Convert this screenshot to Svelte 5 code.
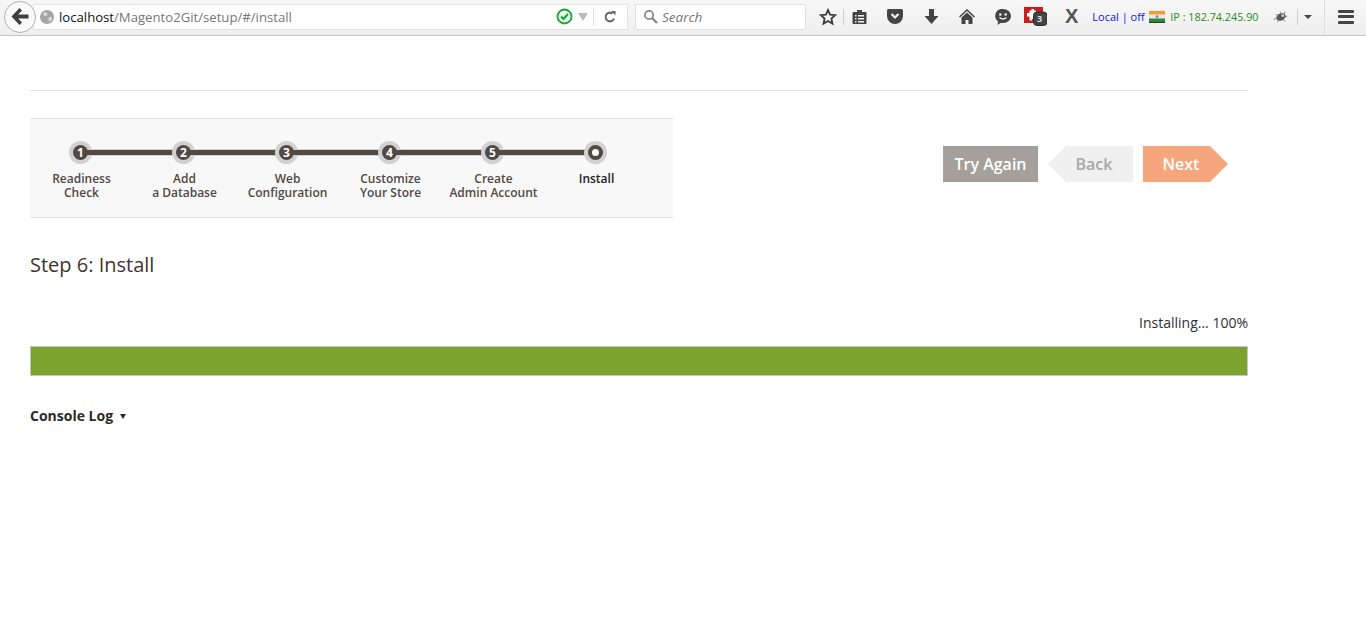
<script>
    const steps = [
        ["Readiness", "Check"],
        ["Add", "a Database"],
        ["Web", "Configuration"],
        ["Customize", "Your Store"],
        ["Create", "Admin Account"],
        ["Install", ""],
    ];
</script>

<div class="toolbar">
    <div class="back">
        <svg width="18" height="17" viewBox="0 0 18 17"><path d="M8.500 0 0.500 8.500 8.500 17 11 14.500 7.200 10.500H17.500V6.500H7.200L11 2.500z" fill="#3d3d3d" /></svg>
    </div>
    <div class="urlbar">
        <svg class="globe" width="14" height="14" viewBox="0 0 14 14">
            <circle cx="7" cy="7" r="7" fill="#a4a4a4" />
            <path d="M3 3l3-1 2 2-2 2-2 0zM9 7l3 0 0 3-3 2-1-3z" fill="#d6d6d6" />
        </svg>
        <span class="url"><span class="host">localhost</span>/Magento2Git/setup/#/install</span>
        <svg class="check" width="17" height="17" viewBox="0 0 17 17">
            <circle cx="8.500" cy="8.500" r="7" fill="#e9f6ea" stroke="#1aa33a" stroke-width="1.800" />
            <path d="M5 8.500l2.500 2.500 4.500-5" fill="none" stroke="#1aa33a" stroke-width="2" />
        </svg>
        <span class="drop"></span>
        <span class="sep"></span>
        <svg class="reload" width="14" height="14" viewBox="0 0 14 14">
            <path d="M11 8.500A4.300 4.300 0 1 1 9.500 3.600" fill="none" stroke="#666" stroke-width="2" />
            <path d="M8 1h4.500v4.500z" fill="#666" />
        </svg>
    </div>
    <div class="searchbar">
        <svg width="15" height="15" viewBox="0 0 15 15">
            <circle cx="6" cy="6" r="4.200" fill="none" stroke="#888" stroke-width="1.800" />
            <path d="M9 9l5 5" stroke="#888" stroke-width="2.400" />
        </svg>
        <span>Search</span>
    </div>
    <svg class="star" width="18" height="18" viewBox="0 0 18 18">
        <path d="M9 2l2.100 4.700 5.100.5-3.800 3.400 1.100 5L9 13l-4.500 2.600 1.100-5L1.800 7.200l5.100-.5z" fill="none" stroke="#3c3c3c" stroke-width="1.800" />
    </svg>
    <span class="tsep star-sep"></span>
    <svg class="clip" width="15" height="16" viewBox="0 0 15 16">
        <path d="M1.500 3h3.500V1h5v2h3.500a1 1 0 0 1 1 1v10a1 1 0 0 1-1 1h-12a1 1 0 0 1-1-1V4a1 1 0 0 1 1-1z" fill="#444" />
        <path d="M3 6h1.500v1.500H3zM3 9h1.500v1.500H3zM3 12h1.500v1.500H3zM6 6h6v1.500H6zM6 9h6v1.500H6zM6 12h6v1.500H6z" fill="#f2f2f2" />
    </svg>
    <svg class="pocket" width="16" height="15" viewBox="0 0 16 15">
        <path d="M1.500 0h13A1.500 1.500 0 0 1 16 1.500V7A8 8 0 0 1 0 7V1.500A1.500 1.500 0 0 1 1.500 0z" fill="#444" />
        <path d="M4.500 5 8 8.500 11.500 5" fill="none" stroke="#f2f2f2" stroke-width="2.200" />
    </svg>
    <svg class="down" width="15" height="15" viewBox="0 0 15 15"><path d="M5 0h5v7h4.500l-7 8-7-8H5z" fill="#444" /></svg>
    <svg class="home" width="16" height="15" viewBox="0 0 16 15">
        <path d="M8 0 0 7.500l1 1L8 2l7 6.500 1-1z" fill="#444" />
        <path d="M8 3.500 2.500 8.500V15h4v-4h3v4h4V8.500z" fill="#444" />
    </svg>
    <svg class="chat" width="16" height="16" viewBox="0 0 16 16">
        <path d="M8 0a8 7 0 0 1 0 14c-.8 0-1.500-.1-2.200-.3L2.500 16l.5-3.500A7 7 0 0 1 8 0z" fill="#444" />
        <circle cx="5.300" cy="5.500" r="1.300" fill="#f2f2f2" />
        <circle cx="10.700" cy="5.500" r="1.300" fill="#f2f2f2" />
        <path d="M4.500 8.500q3.500 3 7 0" fill="none" stroke="#f2f2f2" stroke-width="1.400" />
    </svg>
    <div class="addon">
        <svg width="23" height="19" viewBox="0 0 23 19">
            <rect x="0" y="0" width="19" height="16" fill="#c81e1e" />
            <path d="M3 6h2.500V3.500h2V2h2.500v1.500h2V6h1.500v3h-1.500v3H8v1.500H5.500V9.500H3z" fill="#fff" />
            <rect x="9.500" y="5" width="13.500" height="13.500" rx="3.500" fill="#444" stroke="#2e2e2e" />
        </svg>
        <span>3</span>
    </div>
    <span class="x">X</span>
    <span class="local">Local | off</span>
    <svg class="flag" width="16" height="13" viewBox="0 0 16 13">
        <rect width="16" height="13" fill="#e8e8e8" />
        <rect x="0" y="1" width="16" height="3.500" fill="#f0a030" />
        <rect x="0" y="8.500" width="16" height="3.500" fill="#2f8a2f" />
        <circle cx="8" cy="6.500" r="1.500" fill="#7f8cc0" />
        <rect x="0" y="12" width="16" height="1" fill="#333" />
    </svg>
    <span class="ip">IP : 182.74.245.90</span>
    <svg class="bug" width="15" height="14" viewBox="0 0 17 14">
        <ellipse cx="9" cy="7" rx="5.500" ry="4" fill="#555" transform="rotate(-25 9 7)" />
        <path d="M1 10l5-3M3 4l4 2M8 1l2 3M14 1l-2 3M16 6l-3 1M14 12l-3-3M5 13l2-4" stroke="#777" stroke-width="1" />
        <circle cx="11" cy="5.500" r="1.500" fill="#ddd" />
    </svg>
    <span class="tsep right"></span>
    <span class="caret"></span>
    <span class="tsep menu-sep"></span>
    <div class="burger"><i></i><i></i><i></i></div>
</div>

<main class="page">
    <hr class="rule" />

    <div class="head">
        <nav class="nav">
            {#each steps as s, i}
                <div class="step" class:active={i === 5}>
                    <div class="dot">{i < 5 ? i + 1 : ""}</div>
                    <div class="label">{s[0]}<br />{s[1]}</div>
                </div>
            {/each}
        </nav>
        <div class="actions">
            <button class="again">Try Again</button>
            <button class="prev">Back</button>
            <button class="next">Next</button>
        </div>
    </div>

    <h2>Step 6: Install</h2>

    <div class="status">Installing... 100%</div>
    <div class="bar"></div>

    <div class="console">Console Log <span class="tri"></span></div>
</main>

<style>
    :global(body) {
        margin: 0;
        background: #fff;
    }

    .toolbar {
        height: 33px;
        padding-bottom: 2px;
        border-bottom: 1px solid #c4c4c4;
        background: linear-gradient(#f7f7f7, #efefef);
        display: flex;
        align-items: center;
        font-family: "Open Sans", sans-serif;
    }
    .toolbar > svg {
        flex: none;
    }
    .back {
        width: 30px;
        height: 30px;
        border: 1px solid #b4b4b4;
        border-radius: 50%;
        background: #fafafa;
        margin-left: 4px;
        display: flex;
        align-items: center;
        justify-content: center;
        flex: none;
        z-index: 1;
    }
    .urlbar {
        width: 595px;
        height: 26px;
        margin-left: -3px;
        background: #fff;
        border: 1px solid #e2e2e2;
        box-sizing: border-box;
        display: flex;
        align-items: center;
        padding-left: 6px;
        flex: none;
    }
    .url {
        font-size: 13.15px;
        color: #777;
        margin-left: 5px;
        width: 497px;
        flex: none;
    }
    .host {
        color: #111;
    }
    .check {
        flex: none;
    }
    .drop {
        width: 0;
        height: 0;
        border-left: 5px solid transparent;
        border-right: 5px solid transparent;
        border-top: 8px solid #bbb;
        margin-left: 5px;
    }
    .sep {
        width: 1px;
        height: 18px;
        background: #ddd;
        margin-left: 5px;
    }
    .reload {
        margin-left: 9px;
    }
    .searchbar {
        width: 171px;
        height: 26px;
        margin-left: 7px;
        background: #fff;
        border: 1px solid #e2e2e2;
        box-sizing: border-box;
        display: flex;
        align-items: center;
        padding-left: 7px;
        gap: 4px;
        font-size: 13.5px;
        font-style: italic;
        color: #777;
        flex: none;
    }
    .tsep {
        width: 1px;
        height: 16px;
        background: #ccc;
        display: block;
        flex: none;
    }
    .star { margin-left: 13px; }
    .star-sep { margin: 0 8px 0 6px; }
    .pocket { margin-left: 20px; }
    .down { margin-left: 21px; }
    .home { margin-left: 20px; }
    .chat { margin-left: 20px; }
    .addon {
        position: relative;
        margin-left: 13px;
        width: 23px;
        height: 19px;
        flex: none;
    }
    .addon span {
        position: absolute;
        left: 13px;
        top: 5px;
        font-size: 9px;
        line-height: 13px;
        font-weight: 700;
        color: #ddd;
    }
    .x {
        font-family: "Liberation Sans", sans-serif;
        font-size: 20px;
        font-weight: 700;
        color: #555;
        margin-left: 18px;
    }
    .local {
        font-size: 11px;
        color: #1414e6;
        margin-left: 14px;
        width: 52px;
        white-space: nowrap;
        flex: none;
    }
    .flag { margin-left: 5px; }
    .ip {
        font-size: 10.8px;
        color: #2a8a20;
        margin-left: 5px;
        width: 88px;
        white-space: nowrap;
        flex: none;
    }
    .bug { margin-left: 15px; }
    .tsep.right { margin: 0 0 0 9px; }
    .caret {
        width: 0;
        height: 0;
        border-left: 4px solid transparent;
        border-right: 4px solid transparent;
        border-top: 4px solid #444;
        margin-left: 6px;
    }
    .tsep.menu-sep {
        height: auto;
        align-self: stretch;
        margin: 0 0 -2px 12px;
        background: #ddd;
    }
    .burger {
        margin-left: 13px;
        display: flex;
        flex-direction: column;
        gap: 2.500px;
    }
    .burger i {
        display: block;
        width: 16px;
        height: 3px;
        background: #444;
        border-radius: 1px;
    }

    .page {
        width: 1218px;
        margin-left: 30px;
        font-family: "Open Sans", sans-serif;
        color: #41362f;
    }
    .rule {
        border: 0;
        border-top: 1px solid #e3e3e3;
        margin: 54px 0 0;
    }
    .head {
        display: flex;
        justify-content: space-between;
        margin-top: 27px;
    }
    .nav {
        width: 643px;
        height: 100px;
        box-sizing: border-box;
        background: #f8f8f8;
        border-top: 1px solid #e3e3e3;
        border-bottom: 1px solid #e3e3e3;
        display: flex;
        padding: 26px 0 0;
    }
    .step {
        width: 103px;
        flex: none;
        display: flex;
        flex-direction: column;
        align-items: center;
        position: relative;
    }
    /* grey ring goes under the line, dark disc goes over it */
    .step::before {
        content: "";
        position: absolute;
        left: 39px;
        top: -4px;
        width: 23px;
        height: 23px;
        border-radius: 50%;
        background: #d1d1d1;
    }
    .step::after {
        content: "";
        position: absolute;
        left: 50px;
        width: 103px;
        top: 4px;
        height: 5px;
        background: #514943;
        border-top: 1px solid #d1d1d1;
        border-bottom: 1px solid #d1d1d1;
    }
    .step.active::after {
        display: none;
    }
    .dot {
        width: 15px;
        height: 15px;
        margin-right: 2px;
        border-radius: 50%;
        background: #514943;
        color: #fff;
        font-size: 12px;
        font-weight: 700;
        line-height: 15px;
        text-align: center;
        position: relative;
        z-index: 1;
    }
    .step.active .dot {
        width: 7px;
        height: 7px;
        background: #fff;
        border: 4px solid #514943;
    }
    .label {
        margin-top: 12px;
        font-size: 12px;
        line-height: 14px;
        font-weight: 600;
        text-align: center;
        color: #514943;
        white-space: nowrap;
    }
    .step.active .label {
        color: #222;
    }
    .actions {
        display: flex;
        gap: 10px;
        margin: 28px 20px 0 0;
    }
    button {
        height: 36px;
        border: 0;
        padding: 0;
        font-family: "Open Sans", sans-serif;
        font-size: 16px;
        font-weight: 600;
        color: #fff;
    }
    .again {
        width: 95px;
        background: #a5a09b;
    }
    .prev {
        width: 85px;
        background: #f0f0f0;
        color: #a8a8a8;
        clip-path: polygon(18px 0, 100% 0, 100% 100%, 18px 100%, 0 50%);
        padding-left: 7px;
    }
    .next {
        width: 85px;
        background: #f6a67c;
        clip-path: polygon(0 0, calc(100% - 18px) 0, 100% 50%, calc(100% - 18px) 100%, 0 100%);
        padding-right: 9px;
    }
    h2 {
        font-size: 20px;
        font-weight: 400;
        line-height: 28px;
        margin: 33px 0 0;
    }
    .status {
        margin-top: 34px;
        font-size: 14px;
        line-height: 20px;
        text-align: right;
        color: #303030;
    }
    .bar {
        height: 30px;
        margin-top: 13px;
        box-sizing: border-box;
        background: #7ba42e;
        border: 1px solid #c6c6c6;
    }
    .console {
        margin-top: 30px;
        font-size: 14px;
        line-height: 20px;
        font-weight: 700;
        color: #2d2a28;
        display: flex;
        align-items: center;
    }
    .tri {
        width: 0;
        height: 0;
        border-left: 3px solid transparent;
        border-right: 3px solid transparent;
        border-top: 5px solid #2d2a28;
        margin-left: 7px;
    }
</style>
